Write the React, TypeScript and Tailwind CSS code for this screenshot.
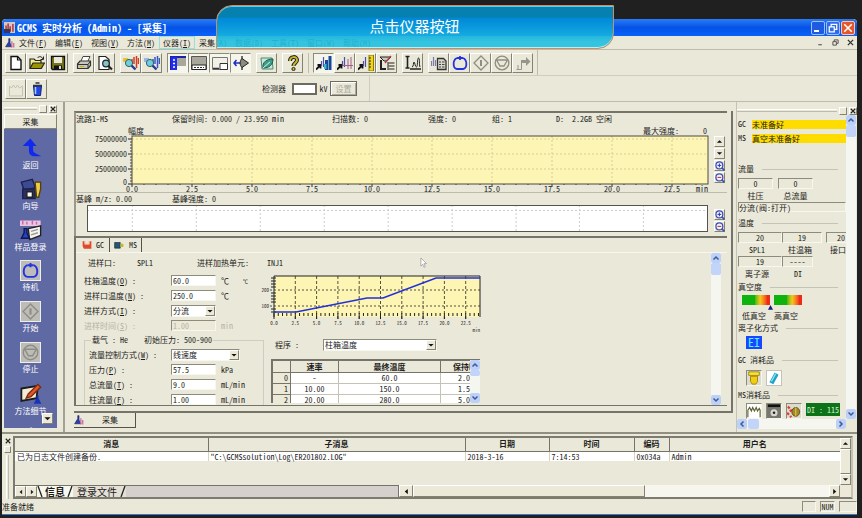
import React from "react";

type Kids = { children?: React.ReactNode };

const raised = "border border-t-white border-l-white border-r-[#85836f] border-b-[#85836f]";
const sunken = "border border-t-[#8d8b7c] border-l-[#8d8b7c] border-r-[#f8f7ee] border-b-[#f8f7ee]";

function Svg({ children, size = 16 }: Kids & { size?: number }) {
  return (
    <svg width={size} height={size} viewBox="0 0 16 16" fill="none" aria-hidden="true" className="shrink-0">
      {children}
    </svg>
  );
}

/* ---------- toolbar glyphs ---------- */

const NewFile = () => (
  <Svg><path d="M3 1.5h6.5L13 5v9.5H3z" fill="#fff" stroke="#111" strokeWidth="1.4" /><path d="M9.5 1.5V5H13" stroke="#111" strokeWidth="1.2" /></Svg>
);
const OpenFile = () => (
  <Svg>
    <path d="M1 13V4h4l1.5 1.5H12V8" fill="#f4ec8a" stroke="#222" strokeWidth="1.2" />
    <path d="M1 13.5 4 8h11.5l-3.2 5.5z" fill="#9a9400" stroke="#222" strokeWidth="1.2" />
    <path d="M8.500 3c1.500-2 4-2 5.500 1M14.500 1.500V4.500H11.500" stroke="#222" />
  </Svg>
);
const Save = () => (
  <Svg><path d="M1.500 1.500h13v13h-12l-1-1z" fill="#77751c" stroke="#111" strokeWidth="1.3" /><path d="M4 2h8v6H4z" fill="#e9e8da" /><path d="M4 10.500h8V14H4z" fill="#111" /><path d="M9 11h2v3H9z" fill="#ddd" /></Svg>
);
const Print = () => (
  <Svg><path d="M5 6 7 1.500h7L12 6" fill="#fff" stroke="#444" /><path d="M1.500 9 4 6h10.500v4.500L12 13.500H1.500z" fill="#c9c8bb" stroke="#333" strokeWidth="1.200" /><path d="M1.500 9.500H12l2.500-3.500M12 9.500v4" stroke="#333" /><path d="M4 11.500h4" stroke="#c7b300" /></Svg>
);
const Preview = () => (
  <Svg><path d="M2 1.500h6.500L12 4.500V14.500H2z" fill="#fff" stroke="#222" strokeWidth="1.200" /><circle cx="9" cy="8.500" r="3.300" fill="#7fc5cb" stroke="#222" strokeWidth="1.200" /><path d="m11.500 11 3.500 3.500" stroke="#222" strokeWidth="2" /></Svg>
);
const SearchPeak = ({ red }: { red?: boolean }) => (
  <Svg>
    <path d="M0 3h5V7H0z" fill={red ? "#e8c33a" : "#9cb6e6"} />
    <path d="M9 8V4M11 9V2M13.500 13V1M15.500 9V3" stroke={red ? "#d23c22" : "#3658c4"} strokeWidth="1.500" />
    <circle cx="6" cy="8" r="3.600" fill="#6fd0d8" stroke="#35606e" />
    <path d="m8.500 10.500 4 4" stroke="#2a3b93" strokeWidth="2.400" />
  </Svg>
);
const PaneLeft = () => (
  <Svg><path d="M0 2h16M1 1v14" stroke="#1a22a8" strokeWidth="2" /><path d="M1 2h6v13H1z" fill="#1d2cf0" /><path d="M3 5h2M3 8.500h2M3 12h2" stroke="#fff" strokeWidth="1.500" /><path d="M7 3h9v8H7z" fill="#a9a79b" /></Svg>
);
const PaneBottom = () => (
  <Svg><path d="M.500 1.500h15v13H.500z" fill="#a9a79b" stroke="#555" /><path d="M1 10h14v4.500H1z" fill="#fff" stroke="#222" /><path d="M3 12.500h10" stroke="#333" strokeDasharray="2 1" /></Svg>
);
const PaneCorner = () => (
  <Svg><path d="M.500 2.500h15v12H.500z" fill="#f2f1e6" stroke="#777" /><path d="M8 8.500h7.500v6H8z" fill="#fff" stroke="#333" /><path d="M1 13.500h6" stroke="#333" strokeWidth="1.500" /></Svg>
);
const Eject = () => (
  <Svg><path d="M7 8H1M3.500 5 1 8l2.500 3" stroke="#1b2cc0" strokeWidth="1.500" /><path d="M9 1v14" stroke="#222" strokeWidth="1.300" /><path d="M9 3.500 15.500 8 9 12.500C6.500 10 6.500 6 9 3.500z" fill="#8d8b80" stroke="#222" /></Svg>
);
const Leaf = () => (
  <Svg><path d="M2 3h11l1 11H3z" fill="#cfe5dc" stroke="#4a8c78" /><path d="M4 13C3 7 8 4 14 4c0 6-4 9-10 9z" fill="#3f9f8a" stroke="#15604c" /><path d="M4 13 11 7" stroke="#d7f2e8" /></Svg>
);
const Help = () => (
  <Svg><path d="M5 6c0-5 7-5 7-1 0 3-3.500 3-3.500 6" stroke="#222" strokeWidth="4" /><path d="M5 6c0-5 7-5 7-1 0 3-3.500 3-3.500 6" stroke="#c9b82a" strokeWidth="2" /><circle cx="8.500" cy="14" r="1.600" fill="#c9b82a" stroke="#222" /></Svg>
);
const Peaks = ({ kind }: { kind: "blue" | "red" | "ruler" }) => (
  <Svg>
    <path d="M0 14.500 4.500 10M1.500 10h3v3.500" stroke="#111" strokeWidth="1.800" />
    <path d="M5.500 11V6M7.500 12V2" stroke="#4a52a8" strokeWidth="1.200" />
    {kind === "blue" && <path d="M10.500 15V5M14 15V1" stroke="#15479a" strokeWidth="3" />}
    {kind === "blue" && <path d="M8 9h2.500v5H8z" fill="#38b7c4" />}
    {kind === "red" && <path d="M6 10.500h10M11 14V4M14 14V2" stroke="#a45c88" />}
    {kind === "ruler" && <path d="M11 0h4.500v16H11z" fill="#f1d813" stroke="#8a7b00" />}
    {kind === "ruler" && <path d="M11 3h2M11 6h2M11 9h2M11 12h2" stroke="#222" />}
  </Svg>
);
const Tune = () => (
  <Svg><path d="M1 2h11L8 6H5z" fill="#c9c8bb" stroke="#222" /><path d="M2 5v9h5" stroke="#222" strokeWidth="2" /><path d="m12 1-6 7" stroke="#b13b4a" strokeWidth="1.300" /><path d="M9.500 8h6M9.500 11h6M9.500 14h6M9 7v8" stroke="#222" /></Svg>
);
const Axis = () => (
  <Svg><path d="M2.500 1v12M.500 1.500h4M.500 13h4M5 14h11" stroke="#222" strokeWidth="1.600" /><path d="M7 12c2 0 1-5 2-5s1 5 2.500 5S12 3 13.500 3 14 10 15 12" stroke="#222" /></Svg>
);
const Report = () => (
  <Svg><path d="M.500 11V6M2.500 11V2M4.500 11V5" stroke="#7a7cae" strokeWidth="1.200" /><path d="M6.500 3.500h6l2.500 2.500v8.500H6.500z" fill="#d7d6c9" stroke="#333" strokeWidth="1.300" /><path d="M8 7h2M11 7h2.500M8 9.500h2M11 9.500h2.500M8 12h2M11 12h2.500" stroke="#444" /></Svg>
);
const Standby = ({ size = 16 }: { size?: number }) => (
  <Svg size={size}><path d="M5 3C.500 5 .500 13 5 14h6c4.500-1 4.500-9 0-11" stroke="#2433e0" strokeWidth="1.800" /><path d="M5 3h6M8 1v4" stroke="#2433e0" strokeWidth="1.800" /></Svg>
);
const Start = ({ size = 16 }: { size?: number }) => (
  <Svg size={size}><path d="M8 1 15 8l-7 7-7-7z" stroke="#8f8d82" strokeWidth="1.300" /><path d="M8 5v6" stroke="#8f8d82" strokeWidth="2" /></Svg>
);
const Stop = ({ size = 16 }: { size?: number }) => (
  <Svg size={size}><circle cx="8" cy="8" r="6.800" stroke="#8f8d82" strokeWidth="1.300" /><path d="M2.500 5h11L10 11H6z" stroke="#8f8d82" strokeWidth="1.300" /></Svg>
);
const Skip = () => (
  <Svg><path d="M1.500 14.500h5V8M3 14.500V10" stroke="#98968a" /><path d="M6 5h5V2l4.500 4.500L11 11V8H6z" fill="#98968a" /></Svg>
);

function ToolButton({ label, pressed, children }: Kids & { label: string; pressed?: boolean }) {
  return (
    <button
      type="button"
      aria-label={label}
      className={`flex h-5 w-[21px] items-center justify-center ${pressed ? `bg-[#f6f5ec] ${sunken}` : raised}`}
    >
      {children}
    </button>
  );
}

function TitleBar() {
  return (
    <header className="flex h-[17px] shrink-0 items-center gap-[2px] rounded-t bg-linear-to-b from-[#2a7cf6] via-[#0553e6] to-[#0a62fb] px-[2px] text-white">
      <Svg size={11}>
        <path d="M0 0h16v16H0z" fill="#d8c6c0" /><path d="M3 14V5M6 14V2M9 14V6M13 14V3" stroke="#a52a35" strokeWidth="2" /><path d="M0 10h9v6H0z" fill="#3b3654" />
      </Svg>
      <h1 className="flex-1 text-[10px] leading-4 font-bold whitespace-nowrap">GCMS 实时分析 (Admin) - [采集]</h1>
      <div className="flex gap-px">
        <button type="button" aria-label="最小化" className="flex size-[14px] items-end justify-start rounded-xs border border-[#9cc0ff] bg-[#1f5be0] p-[2px]">
          <span className="h-[2px] w-[5px] bg-white" />
        </button>
        <button type="button" aria-label="还原" className="flex size-[14px] items-center justify-center rounded-xs border border-[#9cc0ff] bg-[#2f6bea]">
          <Svg size={10}><path d="M5 5V2h9v8h-3M2 6h8v8H2z" stroke="#fff" strokeWidth="2" /></Svg>
        </button>
        <button type="button" aria-label="关闭" className="flex size-[14px] items-center justify-center rounded-xs border border-[#ffc3a8] bg-[#e4572b]">
          <Svg size={10}><path d="m2 2 12 12M14 2 2 14" stroke="#fff" strokeWidth="2.500" /></Svg>
        </button>
      </div>
    </header>
  );
}

const menus = [["文件", "F"], ["编辑", "E"], ["视图", "V"], ["方法", "M"], ["仪器", "I"], ["采集", "A"], ["数据", "D"], ["工具", "T"], ["窗口", "W"], ["帮助", "H"]];

const Flask = ({ size = 10 }: { size?: number }) => (
  <Svg size={size}><path d="M6 1v5L1 14h10L8 8V1z" fill="#2b3fb4" stroke="#1b1d5c" /><path d="M11 15V5M14 15V8" stroke="#c46a9a" strokeWidth="2" /></Svg>
);

function MenuBar() {
  return (
    <nav className="flex h-[14px] shrink-0 items-center border-b border-[#bdbbae] pl-[3px]">
      <Flask />
      {menus.map(([name, key]) => (
        <button
          type="button"
          key={name}
          className={`h-[13px] w-9 whitespace-nowrap border leading-[10px] ${name === "仪器" ? "border-[#8fe3dc]" : "border-transparent"}`}
        >
          {name}(<u>{key}</u>)
        </button>
      ))}
      <div className="ml-auto flex gap-2 pr-[3px]">
        <button type="button" aria-label="最小化子窗口"><Svg size={7}><path d="M3 13h8" stroke="#444" strokeWidth="2.500" /></Svg></button>
        <button type="button" aria-label="还原子窗口"><Svg size={7}><path d="M5 5V2h9v8h-3M2 6h8v8H2z" stroke="#444" strokeWidth="2" /></Svg></button>
        <button type="button" aria-label="关闭子窗口"><Svg size={7}><path d="m2 2 12 12M14 2 2 14" stroke="#333" strokeWidth="3" /></Svg></button>
      </div>
    </nav>
  );
}

function Toolbars() {
  return (
    <>
      <div className="flex h-[26px] shrink-0 items-center gap-[5px] border-b border-[#cfcdbf] pl-[3px]">
        <div className="flex">
          <ToolButton label="新建"><NewFile /></ToolButton>
          <ToolButton label="打开"><OpenFile /></ToolButton>
          <ToolButton label="保存"><Save /></ToolButton>
        </div>
        <div className="flex">
          <ToolButton label="打印"><Print /></ToolButton>
          <ToolButton label="打印预览"><Preview /></ToolButton>
        </div>
        <div className="flex">
          <ToolButton label="查找色谱峰"><SearchPeak red /></ToolButton>
          <ToolButton label="查找质谱峰"><SearchPeak /></ToolButton>
        </div>
        <div className="flex">
          <ToolButton label="助手栏" pressed><PaneLeft /></ToolButton>
          <ToolButton label="输出窗口" pressed><PaneBottom /></ToolButton>
          <ToolButton label="仪器监视器" pressed><PaneCorner /></ToolButton>
          <ToolButton label="收起" pressed><Eject /></ToolButton>
        </div>
        <ToolButton label="环保模式"><Leaf /></ToolButton>
        <ToolButton label="帮助"><Help /></ToolButton>
        <div className="flex border-l border-[#bdbbae] pl-1">
          <ToolButton label="数据采集" pressed><Peaks kind="blue" /></ToolButton>
          <ToolButton label="峰监视"><Peaks kind="red" /></ToolButton>
          <ToolButton label="调谐"><Peaks kind="ruler" /></ToolButton>
          <ToolButton label="真空控制"><Tune /></ToolButton>
        </div>
        <ToolButton label="坐标轴"><Axis /></ToolButton>
        <div className="flex h-full items-center border-r border-[#bdbbae] pr-1">
          <ToolButton label="样品登录"><Report /></ToolButton>
          <ToolButton label="待机"><Standby /></ToolButton>
          <ToolButton label="开始"><Start /></ToolButton>
          <ToolButton label="停止"><Stop /></ToolButton>
          <ToolButton label="跳过"><Skip /></ToolButton>
        </div>
      </div>
      <div className="flex h-[26px] shrink-0 items-center border-b border-[#bdbbae] pl-[3px]">
        <ToolButton label="离子源"><Svg><path d="M1.500 15V5l2 2 2-3 2 3 2-3 2 3 3-2v10z" stroke="#c5c3b5" /></Svg></ToolButton>
        <ToolButton label="载气">
          <Svg><path d="M4.500 5h8l-1 9.500h-6z" fill="#2344e6" stroke="#15226e" /><path d="M4 4.500h9M6.500 2h4" stroke="#333" strokeWidth="1.500" /><path d="M6.500 6v7" stroke="#9fd3f6" strokeWidth="1.500" /></Svg>
        </ToolButton>
        <div className="flex h-full items-center border-r border-[#cfcdbf] pr-3 pl-[215px]">
          <label htmlFor="detector" className="w-[30px]">检测器</label>
          <input id="detector" className="h-3 w-[25px] border-2 border-[#6d6b60] bg-white" />
          <span className="w-[13px] text-center">kV</span>
          <button type="button" className="h-[15px] w-[27px] border border-[#6d6b60] text-[#aaa89b] shadow-[inset_1px_1px_0_#fff,inset_-1px_-1px_0_#aca99a]">设置</button>
        </div>
      </div>
    </>
  );
}

/* ---------- left assistant bar ---------- */

const Frame = ({ children }: Kids) => (
  <span className="flex size-[21px] items-center justify-center border border-[#efeee6] bg-[#bdbcb8]">{children}</span>
);

const assistants: { label: string; icon: React.ReactNode }[] = [
  { label: "返回", icon: <Svg size={22}><path d="M6.500 5v5c0 3 2 4 4 4h5l-4-2c-2-1-2-2-2-3V5z" fill="#1128f0" /><path d="M2 6.500 7.500 1 12 6.500z" fill="#1128f0" /></Svg> },
  { label: "向导", icon: <Svg size={22}><path d="M1 3 9 1l2 6-8 2z" fill="#3c4b92" stroke="#1c2150" /><path d="M2 8h9v7H2z" fill="#2a2f5e" stroke="#1c2150" /><path d="M5 10h4v4H5z" fill="#fff" stroke="#222" /><path d="M11 3h4v5l-1.500 6H12z" fill="#f0cd48" stroke="#55420a" /></Svg> },
  { label: "样品登录", icon: <Svg size={22}><path d="M0 1h15v4H0z" fill="#ecc3e2" /><path d="M2 4V1M5 4V2M9 4V1M12 4V2" stroke="#c768a6" /><path d="m6 7 9-2v7l-8 3z" fill="#f4f3ee" stroke="#222" /><path d="m8 9 5-1.500M8 11.500l5-1.500" stroke="#999" /><path d="M3 7v3l-2 4h6l-2-4V7z" fill="#2440c4" stroke="#10184e" /></Svg> },
  { label: "待机", icon: <Frame><Standby size={17} /></Frame> },
  { label: "开始", icon: <Frame><Start size={17} /></Frame> },
  { label: "停止", icon: <Frame><Stop size={17} /></Frame> },
  { label: "方法细节", icon: <Svg size={22}><path d="m1 4 12-2-1 9-11 2z" fill="#f2ecd6" stroke="#1b1b1b" strokeWidth="1.300" /><path d="m13 1-7 7-1.500 3L8 10l7-7z" fill="#e4572b" stroke="#7a2a10" /><path d="M12 9v2l-2 4h5.500L13.500 11V9z" fill="#1733b8" /></Svg> },
];

function Grip() {
  return (
    <div className="flex h-[9px] shrink-0 items-center gap-[2px]">
      <span className="h-[3px] flex-1 border-t border-b border-t-white border-b-[#bdbbae]" />
      <button type="button" aria-label="固定" className={`size-2 ${raised}`} />
      <button type="button" aria-label="关闭面板" className={`flex size-2 items-center justify-center ${raised}`}>
        <Svg size={6}><path d="m2 2 12 12M14 2 2 14" stroke="#222" strokeWidth="3" /></Svg>
      </button>
    </div>
  );
}

function Sidebar() {
  return (
    <aside className="flex w-[63px] shrink-0 flex-col border-r-2 border-[#a3a193] pt-[2px] pr-[6px] pb-1 pl-[2px]">
      <Grip />
      <div className={`mt-px flex h-[15px] shrink-0 items-center justify-center ${raised}`}>采集</div>
      <div className="relative flex min-h-0 flex-1 flex-col items-center gap-px overflow-hidden bg-[#5f6aa4] pt-2">
        {assistants.map((a) => (
          <button type="button" key={a.label} className="flex h-10 shrink-0 flex-col items-center text-white">
            {a.icon}
            <span className="leading-3 whitespace-nowrap">{a.label}</span>
          </button>
        ))}
        <Svg size={16}><path d="M2 8 8 3l6 4v9H2z" fill="#c5c4bf" /></Svg>
        <button type="button" aria-label="向下滚动" className={`absolute right-1 bottom-1 flex size-[11px] items-center justify-center bg-[#ece9d8] ${raised}`}>
          <Svg size={7}><path d="M1 5h14l-7 7z" fill="#111" /></Svg>
        </button>
      </div>
    </aside>
  );
}

/* ---------- scroll bars ---------- */

function XpArrow({ dir }: { dir: "up" | "down" | "left" | "right" }) {
  const d = { up: "m3 11 5-5 5 5", down: "m3 5 5 5 5-5", left: "m11 3-5 5 5 5", right: "m5 3 5 5-5 5" }[dir];
  return (
    <button type="button" aria-label={dir} className="flex size-[10px] shrink-0 items-center justify-center rounded-xs bg-[#bcd0f8]">
      <Svg size={8}><path d={d} stroke="#3d5b96" strokeWidth="3" /></Svg>
    </button>
  );
}
function XpScroll({ thumb = "h-3" }: { thumb?: string }) {
  return (
    <div className="flex w-[10px] shrink-0 flex-col bg-[#f6f6f1]">
      <XpArrow dir="up" />
      <span className={`${thumb} rounded-xs bg-[#c3d4fb]`} />
      <span className="flex-1" />
      <XpArrow dir="down" />
    </div>
  );
}

/* ---------- chromatogram ---------- */

const minutes = ["2.5", "5.0", "7.5", "10.0", "12.5", "15.0", "17.5", "20.0", "22.5"];

function ZoomButton({ minus }: { minus?: boolean }) {
  return (
    <button type="button" aria-label={minus ? "缩小" : "放大"} className={`flex size-[11px] items-center justify-center ${raised}`}>
      <Svg size={10}>
        <circle cx="7" cy="7" r="5.500" fill="#eef2ff" stroke="#3c4fae" strokeWidth="2" />
        <path d="m11 11 4 4" stroke="#3c4fae" strokeWidth="2.500" />
        <path d={minus ? "M4 7h6" : "M4 7h6M7 4v6"} stroke={minus ? "#c22" : "#33b"} strokeWidth="1.600" />
      </Svg>
    </button>
  );
}

function Chromatogram() {
  return (
    <section className="shrink-0 border-t-2 border-l-2 border-t-[#75736a] border-l-[#9b998c]">
      <div className="flex h-[13px] items-start leading-3 whitespace-nowrap">
        <span className="w-[96px]">流路1-MS</span>
        <span className="w-[160px]">保留时间: 0.000 / 23.950 min</span>
        <span className="w-[96px]">扫描数: 0</span>
        <span className="w-[64px]">强度: 0</span>
        <span className="w-[64px]">组: 1</span>
        <span>D:&nbsp;&nbsp;2.2GB 空闲</span>
      </div>
      <div className="flex pr-[2px]">
        <div className="flex w-14 shrink-0 flex-col items-end pt-[5px] pr-[5px] leading-[15px]">
          <span>75000000</span><span>50000000</span><span>25000000</span><span className="leading-3">0</span>
        </div>
        <div className="min-w-0 flex-1">
          <div className="-ml-1 flex justify-between pr-px leading-[10px]">
            <span>幅度</span>
            <span className="flex gap-6"><span>最大强度:</span><span>0</span></span>
          </div>
          <svg className="block h-14 w-full overflow-visible" role="img" aria-label="总离子流色谱图">
            <rect width="100%" height="48" fill="#fdf5b4" />
            {[3, 18, 33].map((y) => (
              <line key={y} x1="0" x2="100%" y1={y} y2={y} stroke="#d5cd96" strokeDasharray="2 2" />
            ))}
            {[3, 18, 33, 48].map((y) => <line key={y} x1="-4" x2="0" y1={y} y2={y} stroke="#222" />)}
            {[6, 9, 12, 15, 21, 24, 27, 30, 36, 39, 42, 45].map((y) => <line key={y} x1="-2" x2="0" y1={y} y2={y} stroke="#444" />)}
            {Array.from({ length: 48 }, (_, i) => (
              <line key={i} x1={`${(i * 50) / 24}%`} x2={`${(i * 50) / 24}%`} y1="48" y2={i % 5 ? 49 : 51} stroke="#333" />
            ))}
            {minutes.map((m) => {
              const x = `${(Number(m) / 24) * 100}%`;
              return (
                <g key={m}>
                  <line x1={x} x2={x} y1="0" y2="48" stroke="#d5cd96" strokeDasharray="2 2" />
                  <text x={x} y="56" textAnchor="middle" fontSize="8" fill="#222">{m}</text>
                </g>
              );
            })}
            <text x="0" y="56" textAnchor="middle" fontSize="8" fill="#222">0.0</text>
            <text x="100%" y="56" textAnchor="end" fontSize="8" fill="#222">min</text>
            <rect width="100%" height="48" stroke="#4c4a3c" fill="none" />
          </svg>
        </div>
        <div className="flex w-[17px] shrink-0 flex-col items-end gap-px pt-[10px]">
          <button type="button" aria-label="增大刻度" className={`flex size-[11px] items-center justify-center ${raised}`}><Svg size={7}><path d="M2 11h12L8 5z" fill="#111" /></Svg></button>
          <button type="button" aria-label="减小刻度" className={`flex size-[11px] items-center justify-center ${raised}`}><Svg size={7}><path d="M2 5h12l-6 6z" fill="#111" /></Svg></button>
          <ZoomButton />
          <ZoomButton minus />
        </div>
      </div>
      <div className="flex h-[13px] border-t border-[#bdbbae] leading-[11px]">
        <span className="w-[96px]">基峰 m/z: 0.00</span>
        <span>基峰强度: 0</span>
      </div>
      <div className="flex pr-[2px] pb-1 pl-[11px]">
        <svg className="block h-[27px] min-w-0 flex-1" role="img" aria-label="质谱图">
          <rect width="100%" height="100%" fill="#fff" />
          <line x1="0" x2="100%" y1="5.500" y2="5.500" stroke="#ccc" strokeDasharray="2 2" />
          {[7.3, 17.6, 27.9, 38.2, 48.5, 58.8, 69.1, 79.3, 89.6].map((x) => (
            <line key={x} x1={`${x}%`} x2={`${x}%`} y1="0" y2="27" stroke="#ccc" strokeDasharray="2 2" />
          ))}
          <rect width="100%" height="100%" fill="none" stroke="#55534a" strokeWidth="2" />
        </svg>
        <div className="flex w-[17px] shrink-0 flex-col items-end gap-px pt-1">
          <ZoomButton />
          <ZoomButton minus />
        </div>
      </div>
    </section>
  );
}

/* ---------- method form ---------- */

function Combo({ id, value, width }: { id: string; value: string; width: string }) {
  return (
    <span className={`relative block h-3 ${width}`}>
      <select id={id} defaultValue={value} className={`block h-3 w-full appearance-none bg-white pl-px leading-[10px] ${sunken}`}>
        <option>{value}</option>
      </select>
      <span className={`pointer-events-none absolute top-px right-px flex size-[10px] items-center justify-center bg-[#ece9d8] ${raised}`}>
        <Svg size={6}><path d="M1 5h14l-7 7z" fill="#111" /></Svg>
      </span>
    </span>
  );
}

type FieldProps = { id: string; label: string; hot: string; value: string; unit?: string; combo?: string; off?: boolean; inset?: boolean };

function Field({ id, label, hot, value, unit, combo, off, inset }: FieldProps) {
  return (
    <div className={`flex h-[15px] items-center whitespace-nowrap ${off ? "text-[#b5b3a5]" : ""}`}>
      <label htmlFor={id} className={inset ? "w-[82px]" : "w-[87px]"}>{label}(<u>{hot}</u>) :</label>
      {combo ? (
        <Combo id={id} value={value} width={combo} />
      ) : (
        <input id={id} defaultValue={value} disabled={off} className={`h-[11px] w-[45px] pl-px leading-[9px] ${sunken} ${off ? "bg-[#ece9d8]" : "bg-white"}`} />
      )}
      {unit && <span className="pl-[5px]">{unit}</span>}
    </div>
  );
}

const px = (v: number) => 14 + v * 8.52;

function OvenChart() {
  return (
    <svg width="222" height="60" viewBox="0 0 222 60" role="img" aria-label="柱温程序">
      <rect x="14" y="3" width="206" height="41" fill="#fdf5b4" />
      {[17, 33].map((y) => <line key={y} x1="10" x2="220" y1={y} y2={y} stroke="#55523c" strokeDasharray="2 2" />)}
      <text x="9" y="19" fontSize="5" textAnchor="end" fill="#222">200</text>
      <text x="9" y="35" fontSize="5" textAnchor="end" fill="#222">100</text>
      {minutes.map((m) => (
        <g key={m}>
          <line x1={px(+m)} x2={px(+m)} y1="3" y2="46" stroke="#55523c" strokeDasharray="3 2" />
          <text x={px(+m)} y="52" fontSize="5" textAnchor="middle" fill="#222">{m}</text>
        </g>
      ))}
      <text x="14" y="52" fontSize="5" textAnchor="middle" fill="#222">0.0</text>
      <text x="220" y="59" fontSize="5" textAnchor="end" fill="#222">min</text>
      {Array.from({ length: 49 }, (_, i) => (
        <line key={i} x1={px(i / 2)} x2={px(i / 2)} y1="40" y2={i % 5 ? 43 : 46} stroke="#222" />
      ))}
      {[5, 8, 11, 14, 20, 23, 26, 29, 36, 39].map((y) => <line key={y} x1="11" x2="16" y1={y} y2={y} stroke="#222" />)}
      <path d="M14 3v41M14 3h206v41" stroke="#222" fill="none" />
      <path d="M14 39h20l14-3 46-10h14l54-21h58" transform="translate(0 0)" stroke="none" fill="none" />
      <path d="M14 39h22L107 25h16L176 5h44" stroke="#2230d8" strokeWidth="1.600" fill="none" />
    </svg>
  );
}

function ProgramTable() {
  const rows = [["0", "-", "60.0", "2.0"], ["1", "10.00", "150.0", "1.5"], ["2", "20.00", "280.0", "5.0"]];
  return (
    <div className="flex h-[44px] w-[209px] overflow-hidden border-t border-l border-[#75736a]">
      <div className="min-w-0 flex-1 overflow-hidden">
        <table className="w-[230px] table-fixed border-collapse leading-[10px]">
          <colgroup><col className="w-[18px]" /><col className="w-12" /><col className="w-[102px]" /><col className="w-[62px]" /></colgroup>
          <thead>
            <tr className="h-3 font-bold">
              <th className="border border-[#75736a]" /><th className="border border-[#75736a]">速率</th><th className="border border-[#75736a]">最终温度</th>
              <th className="border border-[#75736a] pl-3 text-left">保持时间</th>
            </tr>
          </thead>
          <tbody>
            {rows.map((r) => (
              <tr key={r[0]} className="h-[11px] bg-white text-center">
                <td className="border border-[#75736a] bg-[#ece9d8] pr-[2px] text-right">{r[0]}</td>
                <td className="border border-[#c5c3b5]">{r[1]}</td>
                <td className="border border-[#c5c3b5]">{r[2]}</td>
                <td className="border border-[#c5c3b5] pl-[17px] text-left">{r[3]}</td>
              </tr>
            ))}
          </tbody>
        </table>
      </div>
      <XpScroll thumb="h-[6px]" />
    </div>
  );
}

function MethodPanel() {
  return (
    <section className="flex min-h-0 flex-1 flex-col overflow-hidden border-t-2 border-b border-l-2 border-[#75736a]">
      <div role="tablist" className="flex h-[14px] shrink-0 items-center pl-[6px]">
        <button type="button" role="tab" aria-selected="true" className="flex h-full w-[28px] items-center gap-1 border-r border-[#55534a]">
          <Svg size={10}><path d="M1 2h3v5h8V2h3v12H3L1 10z" fill="#e0492f" /><path d="M5 2v4h6V2" stroke="#f6b8a0" /></Svg>GC
        </button>
        <button type="button" role="tab" aria-selected="false" className="flex h-full w-8 items-center gap-[5px] border-r border-[#55534a] pl-1">
          <Svg size={10}><path d="M1 4h9v9H1z" fill="#1b5a78" stroke="#222" /><path d="M10 6h5v5h-5z" fill="#c9b52c" /></Svg>MS
        </button>
      </div>
      <div className="flex min-h-0 flex-1 border-t border-[#f8f7ee]">
        <div className="min-w-0 flex-1 overflow-hidden pl-2">
          <div className="flex h-5 items-center pl-1 leading-3 whitespace-nowrap">
            <span className="w-[49px]">进样口:</span><span className="w-[60px]">SPL1</span><span className="w-[70px]">进样加热单元:</span><span>INJ1</span>
            <span className="ml-[136px]"><Svg size={10}><path d="M3 0v13l3-3 2 5 2-1-2-5h4z" fill="#fff" stroke="#888" /></Svg></span>
          </div>
          <div className="flex">
            <div className="w-[180px] shrink-0">
              <div className="relative">
                <Field id="oven" label="柱箱温度" hot="O" value="60.0" unit="℃" />
                <Field id="inj" label="进样口温度" hot="N" value="250.0" unit="℃" />
                <Field id="mode" label="进样方式" hot="I" value="分流" combo="w-[45px]" />
                <Field id="time" label="进样时间" hot="S" value="1.00" unit="min" off />
                <span className="absolute top-1 right-4 text-[5px] leading-2">℃</span>
              </div>
              <fieldset className="h-[90px] border border-[#cfcdbf] pl-1">
                <legend className="ml-[2px] flex gap-4 px-px leading-[14px] whitespace-nowrap"><span>载气 : He</span><span>初始压力: 500-900</span></legend>
                <Field id="flow" label="流量控制方式" hot="W" value="线速度" combo="w-[69px]" inset />
                <Field id="pressure" label="压力" hot="P" value="57.5" unit="kPa" inset />
                <Field id="total" label="总流量" hot="T" value="9.0" unit="mL/min" inset />
                <Field id="column" label="柱流量" hot="F" value="1.00" unit="mL/min" inset />
              </fieldset>
            </div>
            <div className="-ml-1 flex flex-col">
              <OvenChart />
              <div className="flex h-5 items-start pt-[6px] pl-[15px] whitespace-nowrap">
                <label htmlFor="program" className="w-12 leading-3">程序 :</label>
                <Combo id="program" value="柱箱温度" width="w-[114px]" />
              </div>
              <div className="mt-[6px] pl-[11px]"><ProgramTable /></div>
            </div>
          </div>
        </div>
        <XpScroll />
        <span className="w-[6px]" />
      </div>
    </section>
  );
}

/* ---------- instrument monitor ---------- */

const Cell = ({ children, w }: Kids & { w: string }) => <span className={`${w} h-[11px] shrink-0 text-center leading-[10px] ${sunken}`}>{children}</span>;

const Heading = ({ children }: Kids) => (
  <h2 className="flex h-[14px] items-center gap-2 whitespace-nowrap">
    {children}<span className="mr-2 h-px flex-1 bg-[#c5c3b5]" />
  </h2>
);

const Tile = ({ children }: Kids) => <span className={`flex size-4 items-center justify-center bg-[#dddbd0] ${sunken}`}>{children}</span>;

const Gauge = () => <span className="h-[10px] w-7 bg-linear-to-r from-[#0eb30e] from-45% via-[#f2c71c] via-65% to-[#ee2a18] to-90%" />;

function Monitor() {
  return (
    <aside className="flex w-[121px] shrink-0 flex-col border-l border-[#c5c3b5] pt-1 pb-[3px]">
      <Grip />
      <div className="flex min-h-0 flex-1">
        <div className="min-w-0 flex-1 overflow-hidden pt-[2px] pl-px">
          {[["GC", "未准备好"], ["MS", "真空未准备好"]].map(([k, v]) => (
            <div key={k} className="flex h-[14px] items-center">
              <span className="w-[14px]">{k}</span><span className="h-[9px] flex-1 bg-[#ffdc00] leading-[9px]">{v}</span>
            </div>
          ))}
          <div className="h-[17px]" />
          <Heading>流量</Heading>
          <div className="mt-[2px] flex gap-[5px]"><Cell w="w-[35px]">0</Cell><Cell w="w-[35px]">0</Cell></div>
          <div className="flex h-[13px] items-center gap-[5px]"><span className="w-[35px] text-center">柱压</span><span className="w-[35px] text-center">总流量</span></div>
          <div className={`h-[10px] leading-[9px] ${sunken}`}>分流(阀:打开)</div>
          <div className="mt-1"><Heading>温度</Heading></div>
          <div className="mt-[2px] flex"><Cell w="w-[44px]">20</Cell><Cell w="w-[40px]">19</Cell><span className="w-1 shrink-0" /><Cell w="w-[30px]">20</Cell></div>
          <div className="flex h-[13px] items-center"><span className="w-[38px] shrink-0 text-center">SPL1</span><span className="w-[48px] shrink-0 text-center">柱温箱</span><span className="shrink-0 pl-[6px] whitespace-nowrap">接口</span></div>
          <div className="flex"><Cell w="w-[44px]">19</Cell><Cell w="w-[31px]">----</Cell></div>
          <div className="flex h-[13px] items-center"><span className="w-[38px] text-center">离子源</span><span className="w-[44px] text-center">DI</span></div>
          <Heading>真空度</Heading>
          <div className="mt-px flex gap-1 pl-1"><Gauge /><Gauge /></div>
          <div className="flex h-[5px] pl-[30px]"><Svg size={5}><path d="M0 15h16L8 0z" fill="#141a7c" /></Svg></div>
          <div className="flex h-[11px] items-center gap-2 pl-1 leading-[10px]"><span>低真空</span><span>高真空</span></div>
          <Heading>离子化方式</Heading>
          <div className="my-px ml-2 h-[13px] w-4 bg-[#1648ff] text-center text-[12px] leading-[12px] text-[#5ff0ff]">EI</div>
          <div className="mt-1"><Heading>GC 消耗品</Heading></div>
          <div className="mt-[3px] flex gap-1 pl-2">
            <Tile><Svg size={14}><path d="M2 1h12v4H2z" fill="#ffe23a" stroke="#97800a" /><path d="M4 6h8v6l-2 3H6l-2-3z" fill="#f3cd12" stroke="#97800a" /></Svg></Tile>
            <span className="flex size-4 items-center justify-center border border-[#c5c3b5] bg-white"><Svg size={14}><path d="m5 14 6-11" stroke="#1ba3c6" strokeWidth="5" /><path d="m5 12 5-9" stroke="#8fe2f2" strokeWidth="1.500" /></Svg></span>
          </div>
          <div className="mt-[2px]"><Heading>MS消耗品</Heading></div>
          <div className="mt-px flex gap-1 pl-2">
            <Tile><Svg size={14}><path d="M0 0h16v16H0z" fill="#fff" /><path d="M1 15V7l2-3 2 4 1.500-4 2 4 2-4 1.500 4 2-3 1 2v8" stroke="#5b6330" strokeWidth="1.300" /></Svg></Tile>
            <Tile><Svg size={14}><path d="M0 0h16v16H0z" fill="#77766e" /><path d="M1 2h14" stroke="#111" strokeWidth="3" /><circle cx="8" cy="10" r="4" fill="#d9d8cf" /><circle cx="8" cy="10" r="1.500" fill="#222" /></Svg></Tile>
            <Tile><Svg size={14}><path d="M1 3l4 4-4 4 4 4" stroke="#df3a2a" strokeWidth="2.500" strokeDasharray="3 2" /><ellipse cx="10" cy="9" rx="4.500" ry="5" fill="#a48a24" stroke="#5b4a0a" /><path d="M10 4v10" stroke="#e5d36a" /></Svg></Tile>
            <span className="h-[13px] w-[34px] shrink-0 bg-[#0d7218] text-center leading-[13px] whitespace-nowrap text-[#c9f5cd]">DI : 115</span>
          </div>
        </div>
        <XpScroll />
        <span className="w-px" />
      </div>
      <div className="mr-[11px] flex h-[10px] shrink-0 bg-[#f6f6f1]">
        <XpArrow dir="left" /><span className="ml-px w-[11px] rounded-xs bg-[#c3d4fb]" /><span className="flex-1" /><XpArrow dir="right" />
      </div>
    </aside>
  );
}

/* ---------- message log ---------- */

const SheetEdge = ({ back }: { back?: boolean }) => (
  <svg width="6" height="11" viewBox="0 0 6 11" aria-hidden="true" className="shrink-0">
    <path d={back ? "M1 0 5 11" : "M5 0 1 11"} stroke="#222" strokeWidth="1.300" />
  </svg>
);

function MessageLog() {
  const head = ["消息", "子消息", "日期", "时间", "编码", "用户名"];
  const row = ["已为日志文件创建备份.", "\"C:\\GCMSsolution\\Log\\ER201802.LOG\"", "2018-3-16", "7:14:53", "0x034a", "Admin"];
  return (
    <section className="flex h-[67px] shrink-0 border-t-2 border-[#918f82] pt-[2px] pr-1">
      <div className="flex w-[11px] shrink-0 flex-col items-center gap-[2px] pt-[2px]">
        <button type="button" aria-label="关闭输出窗口"><Svg size={6}><path d="m2 2 12 12M14 2 2 14" stroke="#222" strokeWidth="3" /></Svg></button>
        <button type="button" aria-label="折叠" className={`size-[7px] ${raised}`} />
        <span className="w-[3px] flex-1 border-r border-l border-r-[#bdbbae] border-l-white" />
      </div>
      <div className="flex min-w-0 flex-1 flex-col border-2 border-[#7d7b6f] border-r-[#c5c3b5]">
        <div className="flex min-h-0 flex-1">
          <div className="min-w-0 flex-1">
            <table className="w-full table-fixed border-collapse">
              <colgroup>
                <col className="w-[193px]" /><col className="w-[257px]" /><col className="w-[84px]" /><col className="w-[85px]" /><col className="w-[35px]" /><col />
              </colgroup>
              <thead>
                <tr className="h-[13px]">
                  {head.map((h) => <th key={h} className="border-r border-b border-[#75736a] p-0 font-bold last:border-r-0">{h}</th>)}
                </tr>
              </thead>
              <tbody>
                <tr className="h-[10px] bg-white leading-[9px]">
                  {row.map((c) => <td key={c} className="border-r border-[#d5d3c6] py-0 pl-[2px] whitespace-nowrap last:border-r-0">{c}</td>)}
                </tr>
              </tbody>
            </table>
          </div>
          <div className="flex w-[11px] shrink-0 flex-col justify-between bg-[#f6f5ee]">
            <button type="button" aria-label="上移" className={`flex h-[11px] items-center justify-center bg-[#ece9d8] ${raised}`}><Svg size={7}><path d="M2 11h12L8 5z" fill="#111" /></Svg></button>
            <span className={`flex-1 bg-[#ece9d8] ${raised}`} />
            <button type="button" aria-label="下移" className={`flex h-[11px] items-center justify-center bg-[#ece9d8] ${raised}`}><Svg size={7}><path d="M2 5h12l-6 6z" fill="#111" /></Svg></button>
          </div>
        </div>
        <div className="flex h-3 shrink-0">
          <div role="tablist" className="flex w-[384px] items-center border-t border-r border-[#75736a] bg-[#d5d0cc] text-[10px] leading-[11px]">
            <button type="button" aria-label="前一页" className={`flex h-[11px] w-[11px] items-center justify-center bg-[#ece9d8] ${raised}`}><Svg size={6}><path d="M11 2v12L4 8z" fill="#222" /></Svg></button>
            <button type="button" aria-label="后一页" className={`flex h-[11px] w-[11px] items-center justify-center bg-[#ece9d8] ${raised}`}><Svg size={6}><path d="M5 2v12l7-6z" fill="#222" /></Svg></button>
            <button type="button" role="tab" aria-selected="true" className="flex items-center gap-[2px] bg-[#f8f7ee] font-bold whitespace-nowrap"><SheetEdge back />信息<SheetEdge /></button>
            <button type="button" role="tab" aria-selected="false" className="flex items-center gap-[3px] bg-[#e4e0d6] pl-1 whitespace-nowrap">登录文件<SheetEdge /></button>
          </div>
          <div className="flex flex-1 bg-[#f6f5ee]">
            <button type="button" aria-label="左移" className={`flex w-[14px] items-center justify-center bg-[#ece9d8] ${raised}`}><Svg size={7}><path d="M11 2v12L4 8z" fill="#111" /></Svg></button>
            <span className={`w-[232px] bg-[#ece9d8] ${raised}`} />
            <span className="flex-1" />
            <button type="button" aria-label="右移" className={`flex w-[11px] items-center justify-center bg-[#ece9d8] ${raised}`}><Svg size={7}><path d="M5 2v12l7-6z" fill="#111" /></Svg></button>
            <span className="w-[11px] bg-[#ece9d8]" />
          </div>
        </div>
      </div>
    </section>
  );
}

export default function App() {
  return (
    <div className="relative flex h-screen w-full flex-col overflow-hidden bg-[#202020] pt-[19px] pr-[5px] pb-[3px] pl-[2px] font-['Noto_Sans_Mono_CJK_SC','Liberation_Serif','Noto_Sans_CJK_SC',serif] text-[8px] leading-3 text-[#1c1c1c]">
      <div className="flex min-h-0 flex-1 flex-col overflow-hidden rounded-t border-b border-[#3a78c8] bg-[#eae8d8]">
        <TitleBar />
        <MenuBar />
        <Toolbars />
        <main className="flex min-h-0 flex-1">
          <Sidebar />
          <div className="flex min-w-0 flex-1 flex-col pt-[9px] pr-[3px] pb-1 pl-[9px]">
            <div className="flex min-h-0 flex-1 flex-col border-r-2 border-b-2 border-[#75736a] pr-1 pb-[5px]">
              <Chromatogram />
              <MethodPanel />
            </div>
            <div role="tablist" className="flex h-[15px] shrink-0">
              <button type="button" role="tab" aria-selected="true" className="flex w-[62px] items-center gap-[18px] border-r border-b border-[#55534a]">
                <Flask />采集
              </button>
            </div>
          </div>
          <Monitor />
        </main>
        <MessageLog />
        <footer className="flex h-[15px] shrink-0 items-center gap-1">
          <span className="flex-1">准备就绪</span>
          <span className={`h-[11px] w-[14px] ${sunken}`} />
          <span className={`h-[11px] w-[15px] text-center leading-[10px] ${sunken}`}>NUM</span>
          <span className={`h-[11px] w-[18px] ${sunken}`} />
        </footer>
      </div>
      <div className="absolute top-[5px] left-1/4 flex h-[44px] w-[398px] items-center justify-center rounded-tl-2xl rounded-br-2xl border border-[#c98f62] bg-linear-to-b from-[#0680ae] from-25% via-[#0289d8] via-30% to-[#20c0e0e6] to-85% pb-[2px] font-['Noto_Sans_CJK_SC',sans-serif] text-[15px] leading-5 text-white shadow-[inset_0_1px_0_#5fd0ea,inset_0_-1px_0_#bdeef2]">
        点击仪器按钮
      </div>
    </div>
  );
}
